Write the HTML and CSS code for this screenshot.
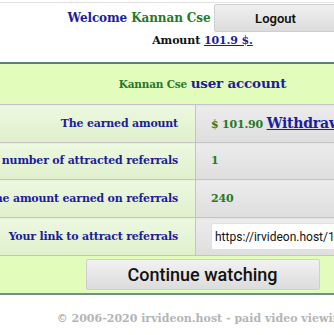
FILE: index.html
```html
<!DOCTYPE html>
<html>
<head>
<meta charset="utf-8">
<link rel="stylesheet" href="styles.css">
</head>
<body>
<div class="frame">
<div class="page">
  <div class="top">
    <div class="welcome-row">
      <span class="welcome">Welcome <span class="name">Kannan Cse</span></span>
      <button class="logout">Logout</button>
    </div>
    <div class="amount">Amount <a href="#">101.9 $.</a></div>
  </div>
  <table class="account">
    <colgroup><col class="c1"><col class="c2"></colgroup>
    <tr class="head">
      <td colspan="2"><span class="name small">Kannan Cse</span> <span class="title">user account</span></td>
    </tr>
    <tr>
      <td class="label">The earned amount</td>
      <td class="value"><span class="money">$ 101.90</span> <a class="withdraw" href="#">Withdraw</a></td>
    </tr>
    <tr class="short">
      <td class="label">The number of attracted referrals</td>
      <td class="value">1</td>
    </tr>
    <tr>
      <td class="label">The amount earned on referrals</td>
      <td class="value">240</td>
    </tr>
    <tr>
      <td class="label">Your link to attract referrals</td>
      <td class="value"><input class="link" type="text" value="https://irvideon.host/1?ref=kannan"></td>
    </tr>
    <tr class="foot">
      <td colspan="2"><button class="continue">Continue watching</button></td>
    </tr>
  </table>
  <div class="copy">© 2006-2020 irvideon.host - paid video viewing</div>
</div>
</div>
</body>
</html>
```

FILE: styles.css
```css
html, body {
  margin: 0;
  padding: 0;
  background: #fff;
  overflow: hidden;
}
body {
  font-family: "DejaVu Serif", serif;
}
.frame {
  width: 334px;
  height: 335px;
  overflow: hidden;
}
.page {
  width: 525px;
  margin-left: -60px;
  border-top: 1px solid #e2e2e2;
  margin-top: 2px;
}
.top {
  display: flex;
  flex-direction: column;
  align-items: center;
  padding-top: 1px;
}
.welcome-row {
  display: flex;
  align-items: center;
  gap: 3px;
  height: 28px;
}
.welcome {
  font-weight: bold;
  font-size: 12px;
  letter-spacing: -0.1px;
  color: #1d1d9c;
}
.name {
  color: #257a25;
}
.logout {
  width: 124px;
  height: 28px;
  font-family: Roboto, sans-serif;
  font-weight: 600;
  font-size: 13px;
  letter-spacing: 0;
  color: #111;
  background: linear-gradient(#f0f0f0, #dcdcdc);
  border: 1px solid #cfcfcf;
  border-radius: 2px;
}
.amount {
  font-weight: bold;
  font-size: 11px;
  letter-spacing: -0.1px;
  color: #111;
  margin-top: 1px;
  line-height: 16px;
}
.amount a {
  color: #1d1d9c;
}
.account {
  margin-top: 13px;
  width: 100%;
  table-layout: fixed;
  border-collapse: collapse;
  border-top: 2px solid #5f7d7d;
  border-bottom: 2px solid #6f8f8f;
  font-weight: bold;
  font-size: 11px;
  letter-spacing: -0.2px;
}
.c1 {
  width: 255px;
}
.account td {
  border: 1px solid #c4c4c4;
  padding: 0;
  line-height: 16px;
  overflow: hidden;
}
.head td {
  height: 40px;
  text-align: center;
  background: #e2fcbc;
  border-left: none;
  border-right: none;
}
.small {
  font-size: 10.5px;
}
.title {
  color: #1d1d9c;
  font-size: 13.5px;
}
.label {
  text-align: right;
  padding-right: 17px !important;
  color: #1d1d9c;
  background: linear-gradient(#ecf8e0, #e0f0cc);
  height: 37px;
  white-space: nowrap;
}
.short .label {
  height: 36px;
}
.value {
  padding-left: 15px !important;
  color: #257a25;
  background: linear-gradient(#ececec, #dedede);
  white-space: nowrap;
}
.money {
  color: #257a25;
}
.withdraw {
  color: #1d1d9c;
  font-size: 14px;
}
.link {
  width: 220px;
  height: 27px;
  box-sizing: border-box;
  border: 1px solid #e0e0e0;
  border-radius: 2px;
  padding: 0 3px;
  font-family: Roboto, sans-serif;
  font-size: 12px;
  letter-spacing: 0;
  color: #111;
  background: #fff;
  vertical-align: middle;
}
.foot td {
  height: 37px;
  text-align: center;
  background: #e2fcbc;
  border-left: none;
  border-right: none;
}
.continue {
  width: 234px;
  height: 31px;
  font-family: Roboto, sans-serif;
  font-weight: 500;
  font-size: 18px;
  letter-spacing: 0;
  color: #111;
  background: linear-gradient(#f2f2f2, #dcdcdc);
  border: 1px solid #cfcfcf;
  border-radius: 2px;
  vertical-align: middle;
}
.copy {
  text-align: center;
  margin-top: 17px;
  font-weight: bold;
  font-size: 11px;
  color: #b5b5b5;
}
```
